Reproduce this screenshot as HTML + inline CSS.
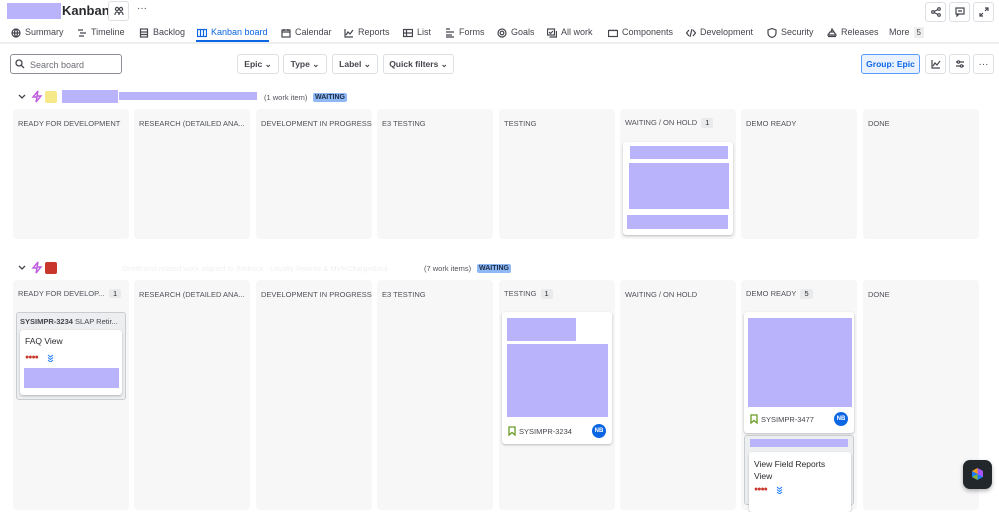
<!DOCTYPE html>
<html><head><meta charset="utf-8"><style>
*{box-sizing:border-box;margin:0;padding:0}
body{width:999px;height:497px;overflow:hidden;background:#fff;font-family:"Liberation Sans",sans-serif;color:#292a2e;position:relative}
.a{position:absolute}
.ph{position:absolute;background:#b9b3fb}
.tab{position:absolute;top:27px;font-size:9px;color:#44464d;white-space:nowrap;display:flex;align-items:center;gap:4px;line-height:11px}
.tab svg{width:10px;height:10px;fill:none;stroke:#44464d;stroke-width:1.2}
.btn{position:absolute;top:54px;height:20px;border:1px solid #dcdfe4;border-radius:3px;font-size:8.5px;font-weight:bold;color:#44464d;display:flex;align-items:center;justify-content:center;background:#fff}
.ib{position:absolute;width:21px;height:20px;border:1px solid #dcdfe4;border-radius:3px;background:#fff;display:flex;align-items:center;justify-content:center;font-size:10px;color:#44464d}
.ib svg{width:10px;height:10px;fill:none;stroke:#44464d;stroke-width:1.2}
.col{position:absolute;width:116px;background:#f7f7f8;border-radius:4px}
.ch{position:absolute;left:5px;top:10px;font-size:7.5px;color:#505258;white-space:nowrap;line-height:10px}
.cnt{display:inline-block;background:#e9eaec;border-radius:2px;padding:0 4px;margin-left:4px;font-size:7.5px;color:#292a2e}
.card{position:absolute;background:#fff;border-radius:3px;box-shadow:0 1px 2px rgba(0,0,0,.25)}
.lz{position:absolute;font-size:7px;font-weight:bold;background:#8fb8f6;color:#1c2b41;padding:0 2px;border-radius:2px;line-height:9px;height:9px}
.nb{position:absolute;width:14px;height:14px;border-radius:50%;background:#0c66e4;color:#fff;font-size:6px;font-weight:bold;display:flex;align-items:center;justify-content:center}
.dots{position:absolute;color:#c9372c;font-size:7px;letter-spacing:-1px}
</style></head><body>
<div class="ph" style="left:7px;top:3px;width:54px;height:16px"></div>
<div class="a" style="left:62px;top:3px;font-size:13px;font-weight:bold">Kanban</div>
<div class="ib" style="left:108px;top:1px"><svg viewBox="0 0 10 10"><circle cx="3" cy="3" r="1.6"/><circle cx="7" cy="3" r="1.6"/><path d="M1 9c0-2 1-3 2-3s2 1 2 3M5 9c0-2 1-3 2-3s2 1 2 3"/></svg></div>
<div class="a" style="left:137px;top:3px;font-size:10px;color:#44464d">···</div>
<div class="ib" style="left:925px;top:2px"><svg viewBox="0 0 10 10"><circle cx="2" cy="5" r="1.3"/><circle cx="8" cy="2" r="1.3"/><circle cx="8" cy="8" r="1.3"/><path d="M3 4.5 7 2.5M3 5.5 7 7.5"/></svg></div>
<div class="ib" style="left:949px;top:2px"><svg viewBox="0 0 10 10"><rect x="1" y="1" width="8" height="6"/><path d="M3 4h4M2 7v2l2-2"/></svg></div>
<div class="ib" style="left:973px;top:2px"><svg viewBox="0 0 10 10"><path d="M6 1h3v3M9 1 6 4M4 9H1V6M1 9l3-3"/></svg></div>

<div class="tab" style="left:11px"><svg viewBox="0 0 10 10"><circle cx="5" cy="5" r="4"/><path d="M1 5h8M5 1c-2 2-2 6 0 8M5 1c2 2 2 6 0 8"/></svg>Summary</div>
<div class="tab" style="left:77px"><svg viewBox="0 0 10 10"><path d="M1 2h5M3 5h6M2 8h5"/></svg>Timeline</div>
<div class="tab" style="left:139px"><svg viewBox="0 0 10 10"><rect x="1.5" y="1" width="7" height="8"/><path d="M1.5 4h7M1.5 6.5h7"/></svg>Backlog</div>
<div class="tab" style="left:197px;color:#0c66e4"><svg viewBox="0 0 10 10" style="stroke:#0c66e4"><rect x="0.5" y="1.5" width="9" height="7"/><path d="M3.5 1.5v7M6.5 1.5v7"/></svg>Kanban board</div>
<div class="a" style="left:196px;top:40px;width:73px;height:2px;background:#0c66e4"></div>
<div class="tab" style="left:281px"><svg viewBox="0 0 10 10"><rect x="1" y="2" width="8" height="7"/><path d="M1 4h8M3 1v2M7 1v2"/></svg>Calendar</div>
<div class="tab" style="left:344px"><svg viewBox="0 0 10 10"><path d="M1 1v8h8M2 7l2-3 2 2 3-4"/></svg>Reports</div>
<div class="tab" style="left:403px"><svg viewBox="0 0 10 10"><rect x="0.5" y="1.5" width="9" height="7"/><path d="M0.5 5h9M3.5 1.5v7"/></svg>List</div>
<div class="tab" style="left:445px"><svg viewBox="0 0 10 10"><path d="M1 1h4M1 4h8M1 7h6M1 9h8"/></svg>Forms</div>
<div class="tab" style="left:497px"><svg viewBox="0 0 10 10"><circle cx="5" cy="5" r="4"/><circle cx="5" cy="5" r="1.8"/></svg>Goals</div>
<div class="tab" style="left:547px"><svg viewBox="0 0 10 10"><rect x="0.5" y="1" width="7" height="6"/><path d="M2.5 9h7V3M2 4l1.5 1.5L6 3"/></svg>All work</div>
<div class="tab" style="left:608px"><svg viewBox="0 0 10 10"><rect x="0.5" y="2.5" width="9" height="6"/><path d="M2 2.5v-1M5 2.5v-1M8 2.5v-1"/></svg>Components</div>
<div class="tab" style="left:686px"><svg viewBox="0 0 10 10"><path d="M3 2 0.5 5 3 8M7 2l2.5 3L7 8M6 1 4 9"/></svg>Development</div>
<div class="tab" style="left:767px"><svg viewBox="0 0 10 10"><path d="M5 .5 9 2v3c0 2.5-2 4-4 4.5C3 9 1 7.5 1 5V2z"/></svg>Security</div>
<div class="tab" style="left:827px"><svg viewBox="0 0 10 10"><path d="M1 7h8L7 4H3zM4 4l1-3 2 3M1 8.5h8"/></svg>Releases</div>
<div class="tab" style="left:889px">More <span style="background:#eee;padding:0 3px;font-size:8px">5</span></div>
<div class="a" style="left:0;top:42px;width:999px;height:2px;background:#eceef0"></div>

<div class="a" style="left:10px;top:54px;width:112px;height:20px;border:1px solid #8c8f97;border-radius:3px;font-size:9px;color:#6b6e76;padding:5px 0 0 19px">Search board</div>
<svg class="a" style="left:15px;top:59px" width="10" height="10" viewBox="0 0 10 10" fill="none" stroke="#44464d" stroke-width="1.3"><circle cx="4" cy="4" r="3"/><path d="M6.3 6.3 9 9"/></svg>
<div class="btn" style="left:237px;width:42px">Epic&nbsp;⌄</div>
<div class="btn" style="left:283px;width:44px">Type&nbsp;⌄</div>
<div class="btn" style="left:332px;width:46px">Label&nbsp;⌄</div>
<div class="btn" style="left:383px;width:71px">Quick filters&nbsp;⌄</div>
<div class="btn" style="left:861px;width:59px;background:#e9f2fe;border-color:#579dff;color:#0c66e4">Group: Epic</div>
<div class="ib" style="left:925px;top:54px"><svg viewBox="0 0 10 10"><path d="M1 1v8h8M2 7l2-3 2 2 3-4"/></svg></div>
<div class="ib" style="left:949px;top:54px"><svg viewBox="0 0 10 10"><path d="M1 3h8M1 7h8"/><circle cx="3.5" cy="3" r="1.2" fill="#fff"/><circle cx="6.5" cy="7" r="1.2" fill="#fff"/></svg></div>
<div class="ib" style="left:973px;top:54px">···</div>

<!-- lane 1 -->
<svg class="a" style="left:18px;top:94px" width="8" height="6" viewBox="0 0 8 6" fill="none" stroke="#44464d" stroke-width="1.3"><path d="M1 1l3 3 3-3"/></svg>
<svg class="a" style="left:31px;top:90px" width="12" height="13" viewBox="0 0 12 13" fill="none" stroke="#c05ce0" stroke-width="1.4"><path d="M7 1 2 7h4l-1 5 5-6H6z"/></svg>
<div class="a" style="left:45px;top:91px;width:12px;height:12px;background:#f5e98a;border-radius:2px"></div>
<div class="ph" style="left:62px;top:90px;width:56px;height:13px"></div>
<div class="ph" style="left:119px;top:92px;width:138px;height:8px"></div>
<div class="a" style="left:264px;top:93px;font-size:7.5px;color:#505258">(1 work item)</div>
<div class="lz" style="left:313px;top:93px">WAITING</div>

<div class="col" style="left:13px;top:109px;height:130px"><div class="ch">READY FOR DEVELOPMENT</div></div>
<div class="col" style="left:134px;top:109px;height:130px"><div class="ch">RESEARCH (DETAILED ANA...</div></div>
<div class="col" style="left:256px;top:109px;height:130px"><div class="ch">DEVELOPMENT IN PROGRESS</div></div>
<div class="col" style="left:377px;top:109px;height:130px"><div class="ch">E3 TESTING</div></div>
<div class="col" style="left:499px;top:109px;height:130px"><div class="ch">TESTING</div></div>
<div class="col" style="left:620px;top:109px;height:130px"><div class="ch" style="top:9px">WAITING / ON HOLD<span class="cnt">1</span></div>
 <div class="card" style="left:3px;top:33px;width:110px;height:93px">
  <div class="ph" style="left:7px;top:4px;width:98px;height:13px"></div>
  <div class="ph" style="left:6px;top:21px;width:100px;height:46px"></div>
  <div class="ph" style="left:4px;top:73px;width:101px;height:14px"></div>
 </div></div>
<div class="col" style="left:741px;top:109px;height:130px"><div class="ch">DEMO READY</div></div>
<div class="col" style="left:863px;top:109px;height:130px"><div class="ch">DONE</div></div>

<!-- lane 2 -->
<svg class="a" style="left:18px;top:265px" width="8" height="6" viewBox="0 0 8 6" fill="none" stroke="#44464d" stroke-width="1.3"><path d="M1 1l3 3 3-3"/></svg>
<svg class="a" style="left:31px;top:261px" width="12" height="13" viewBox="0 0 12 13" fill="none" stroke="#c05ce0" stroke-width="1.4"><path d="M7 1 2 7h4l-1 5 5-6H6z"/></svg>
<div class="a" style="left:45px;top:262px;width:12px;height:12px;background:#c9372c;border-radius:2px"></div>
<div class="a" style="left:122px;top:264px;font-size:7.5px;color:#f0f0f2;white-space:nowrap">OneBrand related work aligned to Bedrock - Loyalty Rewrite &amp; MVRChargeBack</div>
<div class="a" style="left:424px;top:264px;font-size:7.5px;color:#505258">(7 work items)</div>
<div class="lz" style="left:477px;top:264px">WAITING</div>

<div class="col" style="left:13px;top:280px;height:230px"><div class="ch" style="top:9px">READY FOR DEVELOP...</div><span class="cnt a" style="left:96px;top:9px;margin:0">1</span>
 <div class="a" style="left:3px;top:32px;width:110px;height:88px;background:#eceef0;border:1px solid #c9ccd1;border-radius:3px">
  <div class="a" style="left:3px;top:4px;font-size:7.5px;color:#44464d;white-space:nowrap"><b>SYSIMPR-3234</b> SLAP Retir...</div>
  <div class="card" style="left:3px;top:17px;width:102px;height:65px">
   <div class="a" style="left:5px;top:6px;font-size:8.5px">FAQ View</div>
   <div class="dots" style="left:5px;top:24px">●●●●</div>
   <svg class="a" style="left:27px;top:24px" width="7" height="8" viewBox="0 0 7 8" fill="none" stroke="#1d7afc" stroke-width="1"><path d="M1 1l2.5 2L6 1M1 3.5l2.5 2L6 3.5M1 6l2.5 2L6 6"/></svg>
   <div class="ph" style="left:4px;top:38px;width:95px;height:20px"></div>
  </div></div></div>
<div class="col" style="left:134px;top:280px;height:230px"><div class="ch">RESEARCH (DETAILED ANA...</div></div>
<div class="col" style="left:256px;top:280px;height:230px"><div class="ch">DEVELOPMENT IN PROGRESS</div></div>
<div class="col" style="left:377px;top:280px;height:230px"><div class="ch">E3 TESTING</div></div>
<div class="col" style="left:499px;top:280px;height:230px"><div class="ch" style="top:9px">TESTING<span class="cnt">1</span></div>
 <div class="card" style="left:3px;top:32px;width:110px;height:132px">
  <div class="ph" style="left:5px;top:6px;width:69px;height:23px"></div>
  <div class="ph" style="left:5px;top:32px;width:101px;height:73px"></div>
  <svg class="a" style="left:6px;top:114px" width="8" height="10" viewBox="0 0 8 10" fill="none" stroke="#6a9a23" stroke-width="1.3"><path d="M1 1h6v8L4 6.5 1 9z"/></svg>
  <div class="a" style="left:17px;top:115px;font-size:7.5px;color:#44464d">SYSIMPR-3234</div>
  <div class="nb" style="left:90px;top:112px">NB</div>
 </div></div>
<div class="col" style="left:620px;top:280px;height:230px"><div class="ch">WAITING / ON HOLD</div></div>
<div class="col" style="left:741px;top:280px;height:230px"><div class="ch" style="top:9px">DEMO READY<span class="cnt">5</span></div>
 <div class="card" style="left:3px;top:32px;width:110px;height:121px">
  <div class="ph" style="left:4px;top:6px;width:104px;height:89px"></div>
  <svg class="a" style="left:6px;top:102px" width="8" height="10" viewBox="0 0 8 10" fill="none" stroke="#6a9a23" stroke-width="1.3"><path d="M1 1h6v8L4 6.5 1 9z"/></svg>
  <div class="a" style="left:17px;top:103px;font-size:7.5px;color:#44464d">SYSIMPR-3477</div>
  <div class="nb" style="left:90px;top:100px">NB</div>
 </div>
 <div class="a" style="left:3px;top:155px;width:110px;height:70px;background:#eceef0;border:1px solid #c9ccd1;border-radius:3px">
  <div class="ph" style="left:5px;top:3px;width:98px;height:8px"></div>
  <div class="card" style="left:4px;top:16px;width:102px;height:60px">
   <div class="a" style="left:5px;top:6px;font-size:8.5px;line-height:12px">View Field Reports<br>View</div>
   <div class="dots" style="left:5px;top:34px">●●●●</div>
   <svg class="a" style="left:27px;top:34px" width="7" height="8" viewBox="0 0 7 8" fill="none" stroke="#1d7afc" stroke-width="1"><path d="M1 1l2.5 2L6 1M1 3.5l2.5 2L6 3.5M1 6l2.5 2L6 6"/></svg>
  </div></div></div>
<div class="col" style="left:863px;top:280px;height:230px"><div class="ch">DONE</div></div>

<div class="a" style="left:963px;top:460px;width:29px;height:29px;background:#22272b;border-radius:7px;box-shadow:0 2px 4px rgba(0,0,0,.3)">
 <svg width="29" height="29" viewBox="0 0 29 29"><path d="M14.5 8 L20 11 L20 17 L14.5 20 L9 17 L9 11Z" fill="#1d7afc"/><path d="M14.5 8 L20 11 L20 17 L14.5 14Z" fill="#a855f7"/><path d="M9 17 L14.5 20 L14.5 14Z" fill="#82b536"/><path d="M14.5 8 L9 11 L14.5 14Z" fill="#f59e0b"/></svg>
</div>
</body></html>
